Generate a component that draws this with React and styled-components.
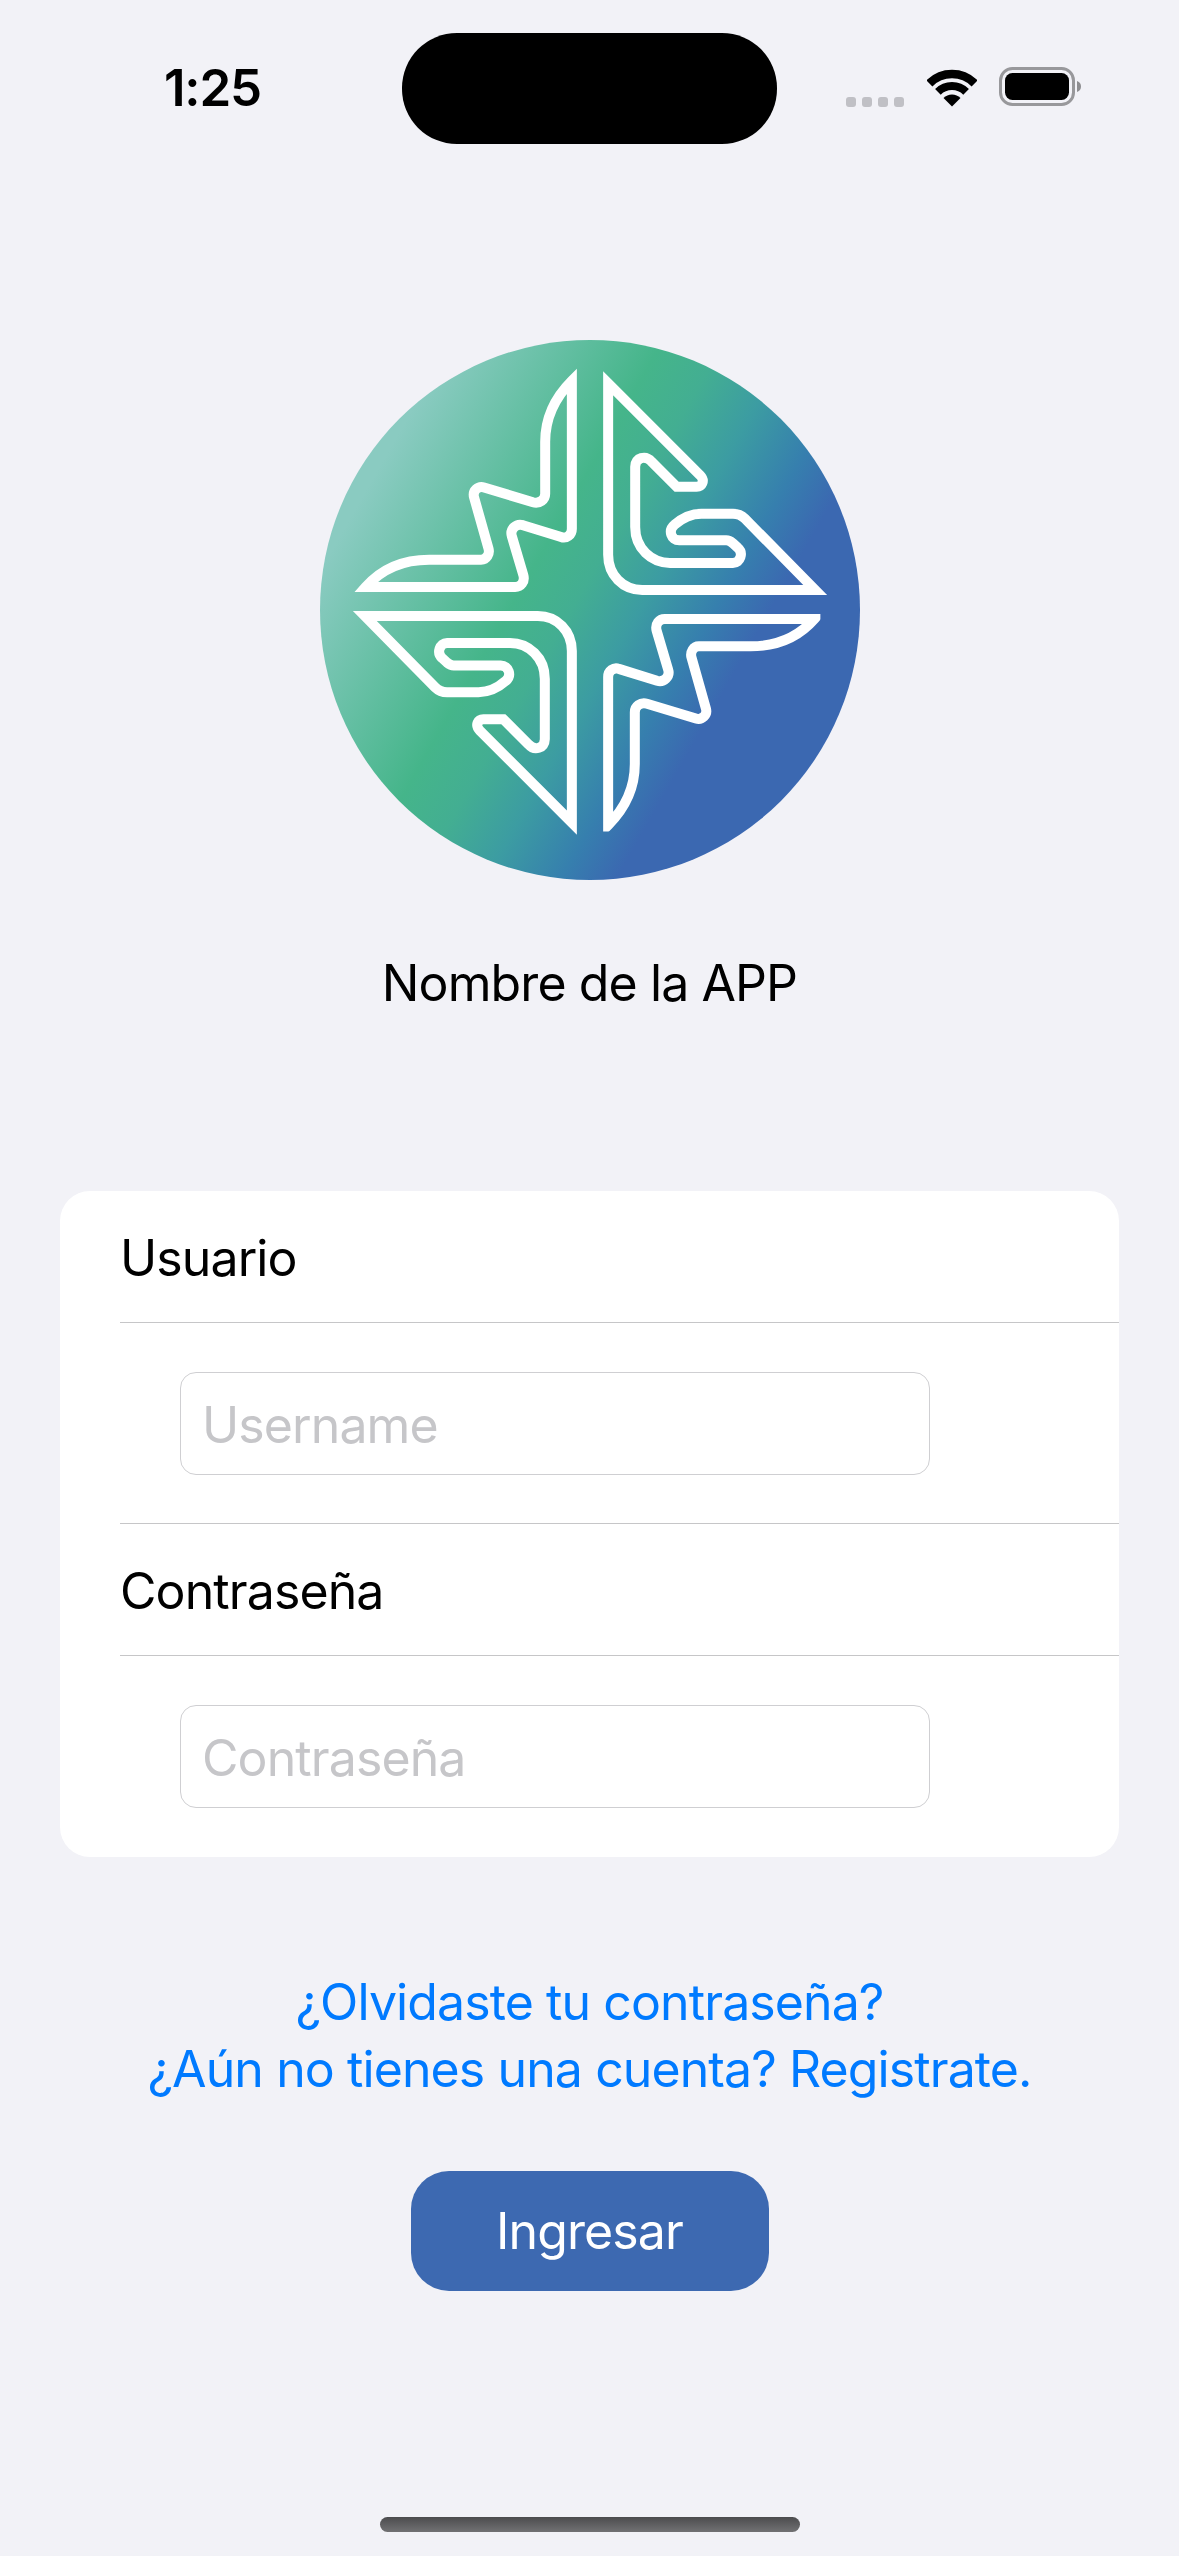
import styled, { createGlobalStyle } from 'styled-components';

const GlobalStyle = createGlobalStyle`
  html, body {
    margin: 0;
    padding: 0;
    background: #f2f2f7;
  }
  * {
    box-sizing: border-box;
  }
`;

const Screen = styled.div`
  width: 1179px;
  height: 2556px;
  display: flex;
  flex-direction: column;
  align-items: center;
  background: #f2f2f7;
  font-family: Inter, 'Liberation Sans', sans-serif;
  letter-spacing: -0.9px;
  overflow: hidden;
`;

const StatusBar = styled.div`
  width: 100%;
  height: 144px;
  padding-top: 33px;
  display: grid;
  grid-template-columns: 402px 375px 1fr;
`;

const Time = styled.div`
  padding: 34px 0 0 164px;
  font-size: 51px;
  font-weight: 600;
  line-height: 42px;
  letter-spacing: -1.2px;
  color: #000;
`;

const Island = styled.div`
  height: 111px;
  border-radius: 55px;
  background: #000;
`;

const StatusIcons = styled.div`
  display: flex;
  align-items: flex-end;
  height: 74px;
  padding-left: 69px;
`;

const Dots = styled.div`
  display: flex;
  gap: 6px;
  margin-right: 23px;
`;

const Dot = styled.span`
  width: 10px;
  height: 10px;
  border-radius: 3px;
  background: #c0c0c5;
`;

const Logo = styled.svg`
  display: block;
  width: 540px;
  height: 540px;
  margin-top: 196px;
  flex-shrink: 0;
`;

const AppName = styled.div`
  margin-top: 73px;
  font-size: 50px;
  line-height: 60px;
  color: #000;
`;

const Card = styled.div`
  width: 1059px;
  margin-top: 178px;
  background: #fff;
  border-radius: 30px;
`;

const LabelRow = styled.div`
  height: 132px;
  margin-left: 60px;
  padding-top: 2px;
  display: flex;
  align-items: center;
  font-size: 50px;
  color: #000;
  border-bottom: 1px solid #c6c6c8;
`;

const InputRow = styled.div`
  height: 201px;
  margin-left: 60px;
  padding: 49px 0 0 60px;
  border-bottom: ${(p) => (p.$last ? 'none' : '1px solid #c6c6c8')};
`;

const TextInput = styled.input`
  display: block;
  width: 750px;
  height: 103px;
  padding: 2px 21px 0;
  border: 1px solid #cfcfd2;
  border-radius: 16px;
  background: #fff;
  outline: none;
  font-family: inherit;
  font-size: 50px;
  letter-spacing: -0.9px;
  color: #000;
  &::placeholder {
    color: #c6c6c9;
    opacity: 1;
  }
`;

const Links = styled.div`
  margin-top: 112px;
  text-align: center;
  font-size: 50px;
  line-height: 67px;
  color: #007aff;
`;

const SubmitButton = styled.button`
  width: 358px;
  height: 120px;
  margin-top: 68px;
  border: none;
  border-radius: 38px;
  background: #3d69b1;
  font-family: inherit;
  font-size: 50px;
  letter-spacing: -0.9px;
  color: #fff;
`;

const HomeBar = styled.div`
  width: 420px;
  height: 15px;
  margin-top: auto;
  margin-bottom: 24px;
  border-radius: 8px;
  background: linear-gradient(180deg, #4c4c4e, #717173);
`;

const WifiIcon = () => (
  <svg width="50" height="38" viewBox="0 0 50 38" style={{ display: 'block', marginRight: 22 }}>
    <g fill="none" stroke="#000">
      <path d="M2.4 14.4A32 32 0 0 1 47.6 14.4" strokeWidth="8.5" />
      <path d="M10.9 22.9A20 20 0 0 1 39.1 22.9" strokeWidth="8" />
    </g>
    <path d="M25 37.5L16.5 29A12 12 0 0 1 33.5 29Z" fill="#000" />
  </svg>
);

const BatteryIcon = () => (
  <svg width="83" height="40" viewBox="0 0 83 40" style={{ display: 'block' }}>
    <rect x="1.5" y="1.5" width="73" height="36" rx="12" fill="none" stroke="#98989b" strokeWidth="3" />
    <rect x="6" y="6" width="64" height="27" rx="7.5" fill="#000" />
    <path d="M78 14C81 15 82 17 82 19.5C82 22 81 24 78 25Z" fill="#8e8e91" />
  </svg>
);

// one arm of the mark, the other two are this path and the next turned 180deg
const ARM_A =
  'M833 172L1081 420C1096 436 1086 451 1072 451L1018 451L950 383C934 365 906 372 906 397L906 560C906 618 950 657 1000 657L1170 657C1190 657 1199 630 1183 616L1170 604C1164 599 1160 596 1152 596L1025 596C1003 596 994 569 1012 554C1030 538 1052 524 1085 524L1170 524C1182 524 1193 528 1202 537L1392 730L925 730C873 730 833 690 833 635Z';
const ARM_B =
  'M735 165L735 565C735 582 720 592 706 587L603 555C585 550 567 565 573 585L604 690C609 708 597 722 582 722L178 722C220 674 280 648 350 648L490 648C505 648 514 632 510 618L471 480C466 462 482 448 498 453L630 493C648 498 663 486 663 470L663 330C663 270 688 212 735 165Z';

const MarkLogo = () => (
  <Logo viewBox="55 55 1458 1458">
    <defs>
      <linearGradient id="logoFill" gradientUnits="userSpaceOnUse" x1="151" y1="422" x2="1417" y2="1146">
        <stop offset="0.03" stopColor="#8acbc1" />
        <stop offset="0.37" stopColor="#45b58a" />
        <stop offset="0.47" stopColor="#43ae92" />
        <stop offset="0.58" stopColor="#3c9ca2" />
        <stop offset="0.7" stopColor="#367fae" />
        <stop offset="0.79" stopColor="#3b68b1" />
        <stop offset="1" stopColor="#3b68b1" />
      </linearGradient>
      <clipPath id="armTips">
        <rect x="55" y="55" width="1351" height="1327" />
      </clipPath>
    </defs>
    <circle cx="784" cy="784" r="729" fill="url(#logoFill)" />
    <g fill="none" stroke="#fff" strokeWidth="27" strokeLinejoin="miter">
      <path d={ARM_A} />
      <path d={ARM_B} />
      <path d={ARM_A} transform="rotate(180 784 765)" />
      <g clipPath="url(#armTips)">
        <path d={ARM_B} transform="rotate(180 784 765)" />
      </g>
    </g>
  </Logo>
);

const App = () => {
  return (
    <Screen>
      <GlobalStyle />
      <StatusBar>
        <Time>1:25</Time>
        <Island />
        <StatusIcons>
          <Dots>
            <Dot />
            <Dot />
            <Dot />
            <Dot />
          </Dots>
          <WifiIcon />
          <BatteryIcon />
        </StatusIcons>
      </StatusBar>
      <MarkLogo />
      <AppName>Nombre de la APP</AppName>
      <Card>
        <LabelRow>Usuario</LabelRow>
        <InputRow>
          <TextInput placeholder="Username" />
        </InputRow>
        <LabelRow>Contraseña</LabelRow>
        <InputRow $last>
          <TextInput placeholder="Contraseña" />
        </InputRow>
      </Card>
      <Links>
        ¿Olvidaste tu contraseña?
        <br />
        ¿Aún no tienes una cuenta? Registrate.
      </Links>
      <SubmitButton>Ingresar</SubmitButton>
      <HomeBar />
    </Screen>
  );
};

export default App;
